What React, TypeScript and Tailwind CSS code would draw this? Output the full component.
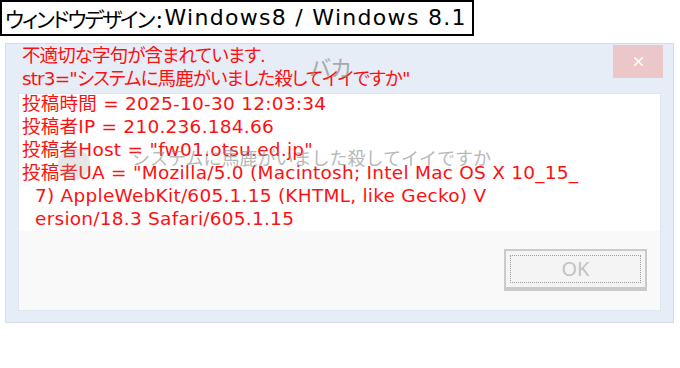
import { X } from "lucide-react";

const body = {
  fontFamily: '"DejaVu Sans", "Noto Sans CJK JP", sans-serif',
  fontFeatureSettings: '"palt"',
};

const jp = { fontFamily: '"Noto Sans CJK JP", sans-serif', fontFeatureSettings: '"palt"' };
const jpFull = { fontFamily: '"Noto Sans CJK JP", sans-serif', fontFeatureSettings: "normal" };

const infoLines = [
  { text: "投稿時間 = 2025-10-30 12:03:34", indent: false },
  { text: "投稿者IP = 210.236.184.66", indent: false },
  { text: '投稿者Host = "fw01.otsu.ed.jp"', indent: false },
  { text: '投稿者UA = "Mozilla/5.0 (Macintosh; Intel Mac OS X 10_15_', indent: false },
  { text: "7) AppleWebKit/605.1.15 (KHTML, like Gecko) V", indent: true },
  { text: "ersion/18.3 Safari/605.1.15", indent: true },
];

export default function App() {
  return (
    <div className="relative w-[680px] h-[368px] overflow-hidden bg-white" style={body}>
      {/* caption */}
      <div className="inline-flex h-[36px] items-center border-2 border-black pl-[3px] pr-[5px] text-black">
        <span className="text-[21px] leading-none tracking-[-2px]" style={jp}>
          ウィンドウデザイン
        </span>
        <span className="ml-[3px] mr-[2px] text-[22px] leading-none" style={jp}>:</span>
        <span className="text-[22px] leading-none tracking-[1.3px]">Windows8 / Windows 8.1</span>
      </div>

      {/* dialog */}
      <div className="ml-[5px] mt-[7px] flex h-[280px] w-[669px] flex-col border border-[#d4dce7] bg-[#e6edf7]">
        <div className="flex h-[49px]">
          <div className="flex-1 pl-[16px] text-[18.5px] leading-[23px] tracking-[-0.9px] text-[#ff1010]">
            <div>不適切な字句が含まれています.</div>
            <div>str3="システムに馬鹿がいました殺してイイですか"</div>
          </div>
          <div className="mr-[10px] mt-[1px] flex h-[33px] w-[50px] items-center justify-center bg-[#ecc7c9]">
            <X className="h-[15px] w-[15px] text-white" strokeWidth={2.5} />
          </div>
        </div>

        <div className="mx-[12px] mb-[11px] flex flex-1 flex-col border border-[#dfe6ef] bg-[#f9f9f9]">
          <div className="h-[137px] bg-white pl-[3px] text-[18.5px] leading-[23px] tracking-[0.25px] text-[#ff1010]">
            <div className="-mt-[2px]">
              {infoLines.map((l, i) => (
                <div key={i} className={l.indent ? "pl-[13px] whitespace-nowrap" : "whitespace-nowrap"}>
                  {l.text}
                </div>
              ))}
            </div>
          </div>
          <div className="flex flex-1 justify-end pr-[13px] pt-[18px]">
            <div className="flex h-[42px] w-[143px] border-2 border-b-[4px] border-[#cacaca] bg-[#f4f4f4] p-[4px]">
              <div className="flex flex-1 items-center justify-center border border-dotted border-[#9a9a9a]">
                <span className="text-[20px] leading-none text-[#c2c2c2]" style={{ fontFamily: '"Noto Sans", sans-serif' }}>
                  OK
                </span>
              </div>
            </div>
          </div>
        </div>
      </div>

      {/* faint overlays */}
      <div className="pointer-events-none absolute left-[310px] top-[55px] text-[22px] leading-none text-[#8c8c8c] opacity-70" style={jp}>
        バカ
      </div>
      <div className="pointer-events-none absolute left-[58px] top-[148px] h-[32px] w-[32px] rounded-full bg-[#9a9a9a] opacity-25" />
      <div className="pointer-events-none absolute left-[132px] top-[148px] text-[18px] leading-none text-[#8a8a8a] opacity-60" style={jpFull}>
        システムに馬鹿がいました殺してイイですか
      </div>
    </div>
  );
}
